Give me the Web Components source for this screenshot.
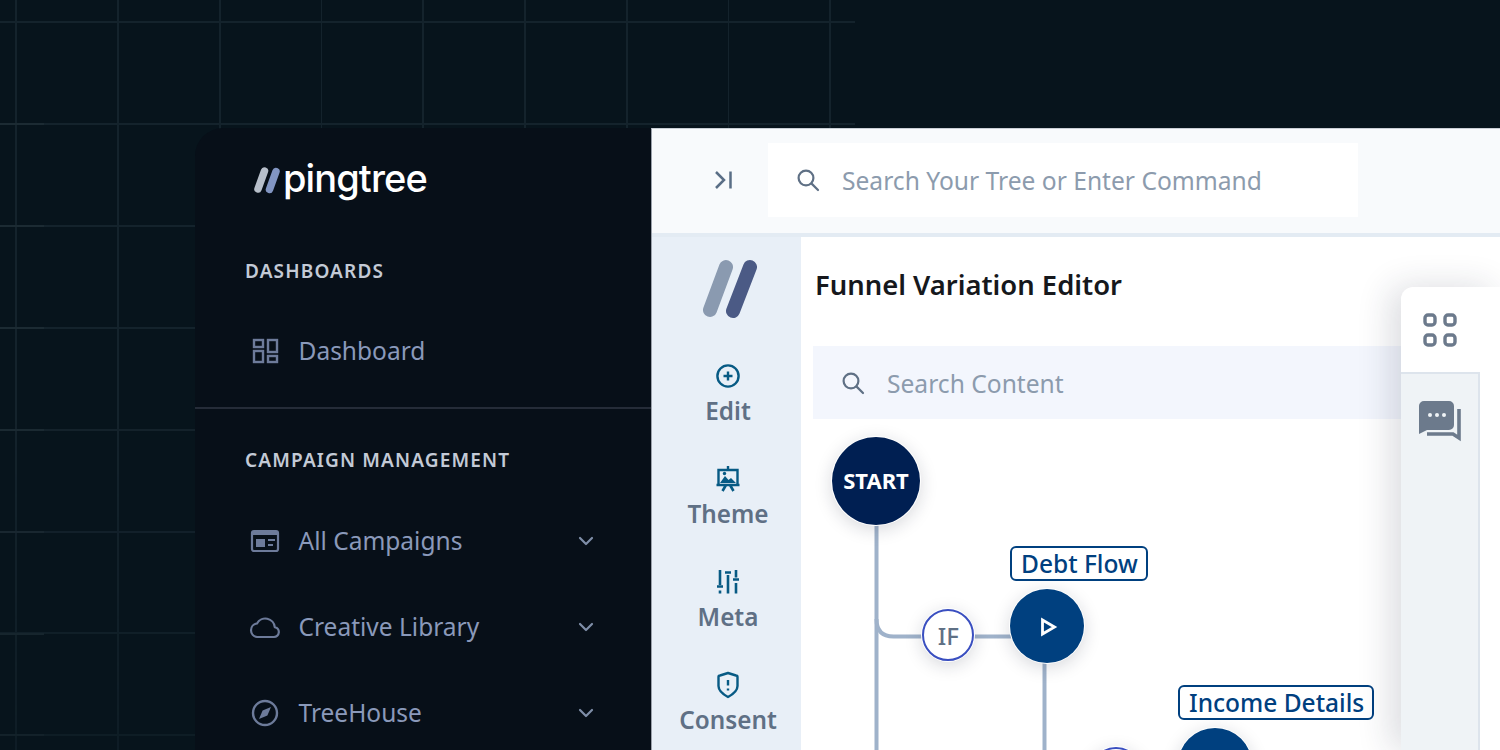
<!DOCTYPE html>
<html lang="en">
<head>
<meta charset="utf-8">
<title>pingtree</title>
<style>
  html, body { margin: 0; height: 100%; background: #07141c; overflow: hidden; }
  body { font-family: "Noto Sans", "Open Sans", sans-serif; }
</style>
</head>
<body>
<app-shell></app-shell>
<script>
const icons = {
  dashboard: '<svg width="27" height="26" viewBox="0 0 27 26" fill="none" stroke="#6d7b9a" stroke-width="2.4"><rect x="2" y="2" width="9" height="7"/><rect x="16" y="2" width="9" height="12"/><rect x="2" y="13" width="9" height="11"/><rect x="16" y="18" width="9" height="6"/></svg>',
  campaigns: '<svg width="30" height="26" viewBox="0 0 30 26" fill="none"><rect x="2" y="3" width="26" height="20" rx="2" stroke="#6d7b9a" stroke-width="2.2"/><rect x="2" y="3" width="26" height="4" fill="#6d7b9a"/><rect x="6" y="11" width="9" height="8" fill="#6d7b9a"/><path d="M18 12h7M18 17h5" stroke="#6d7b9a" stroke-width="2"/></svg>',
  cloud: '<svg width="32" height="24" viewBox="0 0 32 24" fill="none" stroke="#6d7b9a" stroke-width="2.2" stroke-linejoin="round"><path d="M8 22h17a5 5 0 0 0 .8-9.900A9.500 9.500 0 0 0 8 8.500a6.800 6.800 0 0 0 0 13.500z"/></svg>',
  compass: '<svg width="30" height="30" viewBox="0 0 30 30"><circle cx="15" cy="15" r="12" fill="none" stroke="#6d7b9a" stroke-width="2.4"/><path d="M21 9l-3.600 8.400L9 21l3.600-8.400z" fill="#6d7b9a"/></svg>',
  chevron: '<svg width="16" height="10" viewBox="0 0 16 10" fill="none" stroke="#7f8ea8" stroke-width="2.2" stroke-linecap="round" stroke-linejoin="round"><path d="M2 2l6 6 6-6"/></svg>',
  toggle: '<svg width="20" height="20" viewBox="0 0 20 20" fill="none" stroke="#5a6e86" stroke-width="2.5"><path d="M2 2l8 8-8 8"/><path d="M16.500 1.500v17"/></svg>',
  search: '<svg width="24" height="24" viewBox="0 0 24 24" fill="none" stroke="#5f7085" stroke-width="2.2" stroke-linecap="round"><circle cx="10" cy="10" r="7.400"/><path d="M15.600 15.600l6.400 6.400"/></svg>',
  edit: '<svg width="26" height="26" viewBox="0 0 26 26" fill="none" stroke="#075a84" stroke-width="2.4"><circle cx="13" cy="13" r="10.600"/><path d="M13 8.500v9M8.500 13h9"/></svg>',
  theme: '<svg width="26" height="26" viewBox="0 0 26 26" fill="none" stroke="#075a84" stroke-width="2.400"><path d="M13 0v4"/><path d="M3.500 18V4h19v14"/><path d="M1.500 19h23M11 19l-3.500 6M15 19l3.500 6" stroke-width="2.600"/><path d="M5 17l5-7 3.500 4 2.500-2 5 5z" fill="#075a84" stroke="none"/><circle cx="9.500" cy="7.500" r="1.700" fill="#075a84" stroke="none"/></svg>',
  meta: '<svg width="24" height="26" viewBox="0 0 24 26" fill="none" stroke="#075a84" stroke-width="2.600"><path d="M4 1v15M4 21.500v3M12 6v18.500M20 1v7.500M20 14v10.500"/><path d="M1 17.500h6M9 3.500h6M17 10.500h6" stroke-width="2.600"/></svg>',
  consent: '<svg width="24" height="28" viewBox="0 0 24 28" fill="none" stroke="#075a84" stroke-width="2.400" stroke-linejoin="round"><path d="M12 2l8 2.500a1.500 1.500 0 0 1 1.500 1.500v9c0 4-4 8-9.500 11C6.500 23 2.500 19 2.500 15V6A1.500 1.500 0 0 1 4 4.500z"/><path d="M12 9v5.500M12 17.500v2"/></svg>',
  play: '<svg width="18" height="20" viewBox="0 0 18 20" fill="none" stroke="#fff" stroke-width="2.800"><path d="M2.500 3l12 7-12 7z"/></svg>',
  apps: '<svg width="34" height="34" viewBox="0 0 34 34" fill="none" stroke="#6c7a8c" stroke-width="3.400"><rect x="2" y="2" width="10" height="10" rx="3"/><rect x="22" y="2" width="10" height="10" rx="3"/><rect x="2" y="22" width="10" height="10" rx="3"/><rect x="22" y="22" width="10" height="10" rx="3"/></svg>',
  chat: '<svg width="44" height="42" viewBox="0 0 44 42"><path d="M6 1h25a5 5 0 0 1 5 5v19a5 5 0 0 1-5 5H9l-8 4V6a5 5 0 0 1 5-5z" fill="#6c7a8c"/><circle cx="12" cy="15" r="2" fill="#eff3f6"/><circle cx="19" cy="15" r="2" fill="#eff3f6"/><circle cx="26" cy="15" r="2" fill="#eff3f6"/><path d="M41 9v29l-6-4H9" fill="none" stroke="#6c7a8c" stroke-width="3.600"/></svg>'
};

class GridBackdrop extends HTMLElement {
  constructor() {
    super();
    this.attachShadow({ mode: 'open' }).innerHTML = `
      <style>
        :host {
          position: absolute; left: 0; top: 0; width: 855px; height: 750px;
          background-image:
            repeating-linear-gradient(180deg, transparent 0 21px, #1c2b33 21px 23px, transparent 23px 101.900px),
            repeating-linear-gradient(90deg, transparent 0 15.500px, #14232c 15.500px 17px, transparent 17px 101.750px),
            repeating-linear-gradient(180deg, transparent 0 21px, #14232c 21px 23px, transparent 23px 101.900px);
          background-size: 44px 100%, 100% 100%, 100% 100%;
          background-position: 0 102px, 0 0, 0 0;
          background-repeat: no-repeat;
          -webkit-mask-image: linear-gradient(#000 55%, rgba(0, 0, 0, .6));
          mask-image: linear-gradient(#000 55%, rgba(0, 0, 0, .6));
        }
      </style>`;
  }
}

class BrandMark extends HTMLElement {
  constructor() {
    super();
    this.attachShadow({ mode: 'open' }).innerHTML = `
      <style>
        :host { display: flex; align-items: center; height: 104px; padding-left: 59px; }
        svg { display: block; }
        span { font: 500 38px/1 Inter, sans-serif; letter-spacing: -.9px; color: #fff; margin-left: 2px; position: relative; top: -2px; }
      </style>
      <svg width="27" height="28" viewBox="0 0 27 28" fill="none" stroke-linecap="round" stroke-width="7.500">
        <path d="M10.500 5L4 23" stroke="#b7bfca"/><path d="M22 5.500L15.500 23.500" stroke="#8195c2"/>
      </svg>
      <span>pingtree</span>`;
  }
}

class NavHeading extends HTMLElement {
  constructor() {
    super();
    this.attachShadow({ mode: 'open' }).innerHTML = `
      <style>
        :host { display: block; font-size: 19px; line-height: 26px; font-weight: 600; letter-spacing: 1.150px; color: #c3cad6; }
      </style><slot></slot>`;
  }
}

class NavItem extends HTMLElement {
  constructor() {
    super();
    const chevron = this.hasAttribute('expandable') ? `<span class="chev">${icons.chevron}</span>` : '';
    this.attachShadow({ mode: 'open' }).innerHTML = `
      <style>
        :host { display: flex; align-items: center; height: 86px; font-size: 24.500px; color: #8a99ba; }
        .icon { width: 40px; margin-right: 13.500px; display: flex; justify-content: center; }
        svg { display: block; }
        .label { flex: 1; padding-bottom: 2px; }
        .chev { width: 28px; display: flex; justify-content: center; }
      </style>
      <span class="icon">${icons[this.getAttribute('icon')]}</span>
      <span class="label"><slot></slot></span>${chevron}`;
  }
}

class SideNav extends HTMLElement {
  constructor() {
    super();
    this.attachShadow({ mode: 'open' }).innerHTML = `
      <style>
        :host { display: block; width: 456px; flex: none; background: #070f18; border-radius: 28px 0 0 0; box-sizing: border-box; }
        .sec { padding: 0 51px 0 50px; }
        hr { border: 0; height: 2px; background: #252c38; margin: 0; }
        nav-heading { padding-top: 26px; margin-bottom: 24px; }
        .second nav-heading { padding-top: 38px; margin-bottom: 25px; }
      </style>
      <brand-mark></brand-mark>
      <div class="sec" style="padding-bottom:13px">
        <nav-heading>DASHBOARDS</nav-heading>
        <nav-item icon="dashboard">Dashboard</nav-item>
      </div>
      <hr>
      <div class="sec second">
        <nav-heading>CAMPAIGN MANAGEMENT</nav-heading>
        <nav-item icon="campaigns" expandable>All Campaigns</nav-item>
        <nav-item icon="cloud" expandable>Creative Library</nav-item>
        <nav-item icon="compass" expandable>TreeHouse</nav-item>
      </div>`;
  }
}

class SearchField extends HTMLElement {
  constructor() {
    super();
    this.attachShadow({ mode: 'open' }).innerHTML = `
      <style>
        :host { display: flex; align-items: center; box-sizing: border-box; padding-left: var(--pad, 28px); font-size: 24.600px; color: #8c9bad; }
        svg { display: block; margin-right: 22px; flex: none; }
        span { padding-top: 2px; }
      </style>${icons.search}<span><slot></slot></span>`;
  }
}

class TopBar extends HTMLElement {
  constructor() {
    super();
    this.attachShadow({ mode: 'open' }).innerHTML = `
      <style>
        :host { display: flex; align-items: center; flex: none; background: #f8fafc; padding-left: 62px; box-sizing: border-box; border-bottom: 4px solid #e3ebf3; height: 108px; padding-bottom: 3px; }
        svg { display: block; margin-right: 34px; }
        search-field { width: 590px; height: 74px; background: #fff; }
      </style>${icons.toggle}<search-field>Search Your Tree or Enter Command</search-field>`;
  }
}

class RailItem extends HTMLElement {
  constructor() {
    super();
    this.attachShadow({ mode: 'open' }).innerHTML = `
      <style>
        :host { display: flex; flex-direction: column; align-items: center; height: 103px; font-size: 24.300px; line-height: 34px; font-weight: 600; color: #5f7085; }
        .ic { height: 28px; margin: 1px 0 4px; display: flex; align-items: center; }
        svg { display: block; }
      </style>
      <span class="ic">${icons[this.getAttribute('icon')]}</span><slot></slot>`;
  }
}

class ToolRail extends HTMLElement {
  constructor() {
    super();
    this.attachShadow({ mode: 'open' }).innerHTML = `
      <style>
        :host { display: block; width: 149px; flex: none; background: #e8eff7; box-sizing: border-box; padding-left: 3px; }
        .logo { display: block; margin: 22px auto 42px; }
      </style>
      <svg class="logo" width="58" height="60" viewBox="-3 0 58 60" fill="none" stroke-linecap="round" stroke-width="14">
        <path d="M24 8L8 51" stroke="#8a9ab0"/><path d="M48 8L31 52" stroke="#4b5a85"/>
      </svg>
      <rail-item icon="edit">Edit</rail-item>
      <rail-item icon="theme">Theme</rail-item>
      <rail-item icon="meta">Meta</rail-item>
      <rail-item icon="consent">Consent</rail-item>`;
  }
}

class FlowNode extends HTMLElement {
  constructor() {
    super();
    const kind = this.getAttribute('kind');
    const size = { start: 88, step: 74, cond: 52 }[kind];
    const play = this.hasAttribute('play') ? icons.play : '';
    this.attachShadow({ mode: 'open' }).innerHTML = `
      <style>
        :host {
          position: absolute; left: ${this.getAttribute('x') - size / 2}px; top: ${this.getAttribute('y') - size / 2}px;
          width: ${size}px; height: ${size}px; border-radius: 50%; box-sizing: border-box;
          display: flex; align-items: center; justify-content: center;
          box-shadow: 0 0 0 1px #fff, 0 4px 18px rgba(20, 30, 50, .18);
        }
        :host([kind=start]) { background: #001f52; color: #fff; font-size: 22px; line-height: 26px; font-weight: 700; padding-bottom: 2px; }
        :host([kind=step]) { background: #00407f; padding: 2px 0 0 5px; }
        :host([kind=cond]) { background: #fff; border: 2px solid #3a4fc0; color: #5f7085; font-size: 24px; font-weight: 500; }
        svg { display: block; }
      </style>${play}<slot></slot>`;
  }
}

class FlowLabel extends HTMLElement {
  constructor() {
    super();
    this.attachShadow({ mode: 'open' }).innerHTML = `
      <style>
        :host {
          position: absolute; left: ${this.getAttribute('x')}px; top: ${this.getAttribute('y')}px;
          height: 35px; box-sizing: border-box; padding: 0 8px 0 9px; border: 2px solid #00407f; border-radius: 6px;
          background: #fff; color: #00407f; font-size: 24.500px; line-height: 32px; font-weight: 500; white-space: nowrap;
        }
      </style><slot></slot>`;
  }
}

class FlowCanvas extends HTMLElement {
  constructor() {
    super();
    this.attachShadow({ mode: 'open' }).innerHTML = `
      <style>
        :host { display: block; position: relative; flex: 1; overflow: hidden; }
        svg { position: absolute; left: 0; top: 0; }
      </style>
      <svg width="699" height="331" viewBox="0 0 699 331" fill="none" stroke="#9fb2ca" stroke-width="4">
        <path d="M75.500 100V331"/>
        <path d="M75.500 200q0 17.500 17 17.500H230"/>
        <path d="M243.500 240V331"/>
      </svg>
      <slot></slot>`;
  }
}

class SideDock extends HTMLElement {
  constructor() {
    super();
    this.attachShadow({ mode: 'open' }).innerHTML = `
      <style>
        :host {
          position: absolute; right: 0; top: 50px; bottom: 0; width: 99px; background: #fff;
          border-radius: 12px 0 0 0; box-shadow: -10px 0 34px rgba(30, 40, 60, .16);
        }
        .head { height: 85px; width: 77px; display: flex; align-items: center; justify-content: center; }
        .tab { box-sizing: border-box; width: 79px; height: 400px; background: #eff3f6; border: solid #dde4ec; border-width: 2px 2px 0 0; display: flex; justify-content: center; padding-top: 26px; }
        svg { display: block; }
      </style>
      <div class="head">${icons.apps}</div>
      <div class="tab">${icons.chat}</div>`;
  }
}

class EditorPane extends HTMLElement {
  constructor() {
    super();
    this.attachShadow({ mode: 'open' }).innerHTML = `
      <style>
        :host { display: flex; flex-direction: column; flex: 1; position: relative; background: #fff; min-width: 0; overflow: hidden; }
        h1 { margin: 30px 0 43px 14px; font-size: 27.400px; line-height: 36px; font-weight: 600; color: #16181c; white-space: nowrap; }
        search-field { margin-left: 12px; height: 73px; flex: none; background: #f3f6fd; --pad: 28px; }
      </style>
      <h1>Funnel Variation Editor</h1>
      <search-field>Search Content</search-field>
      <flow-canvas>
        <flow-node kind="start" x="75" y="62">START</flow-node>
        <flow-node kind="cond" x="147.300" y="216">IF</flow-node>
        <flow-label x="209" y="127">Debt Flow</flow-label>
        <flow-node kind="step" x="245.500" y="207" play></flow-node>
        <flow-label x="377" y="266">Income Details</flow-label>
        <flow-node kind="cond" x="315" y="354"></flow-node>
        <flow-node kind="step" x="414" y="346"></flow-node>
      </flow-canvas>
      <side-dock></side-dock>`;
  }
}

class AppShell extends HTMLElement {
  constructor() {
    super();
    this.attachShadow({ mode: 'open' }).innerHTML = `
      <style>
        :host { display: block; position: relative; height: 750px; box-sizing: border-box; padding: 128px 0 0 195px; overflow: hidden; }
        .panel { position: relative; display: flex; height: 622px; }
        .main { flex: 1; min-width: 0; display: flex; flex-direction: column; border-left: 1px solid #9aa0aa; border-top: 1px solid #c9cfd6; }
        .body { flex: 1; display: flex; min-height: 0; }
      </style>
      <grid-backdrop></grid-backdrop>
      <div class="panel">
        <side-nav></side-nav>
        <div class="main">
          <top-bar></top-bar>
          <div class="body"><tool-rail></tool-rail><editor-pane></editor-pane></div>
        </div>
      </div>`;
  }
}

customElements.define('grid-backdrop', GridBackdrop);
customElements.define('brand-mark', BrandMark);
customElements.define('nav-heading', NavHeading);
customElements.define('nav-item', NavItem);
customElements.define('side-nav', SideNav);
customElements.define('search-field', SearchField);
customElements.define('top-bar', TopBar);
customElements.define('rail-item', RailItem);
customElements.define('tool-rail', ToolRail);
customElements.define('flow-node', FlowNode);
customElements.define('flow-label', FlowLabel);
customElements.define('flow-canvas', FlowCanvas);
customElements.define('side-dock', SideDock);
customElements.define('editor-pane', EditorPane);
customElements.define('app-shell', AppShell);
</script>
</body>
</html>
